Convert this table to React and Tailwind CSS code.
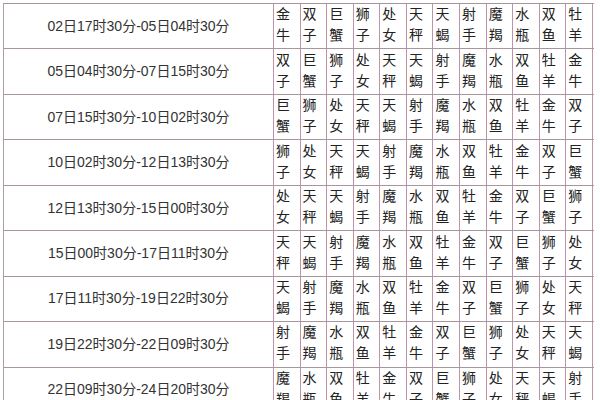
import React from "react";

const signs = ["牡羊", "金牛", "双子", "巨蟹", "狮子", "处女", "天秤", "天蝎", "射手", "魔羯", "水瓶", "双鱼"];
const times = [
  "02日17时30分-05日04时30分",
  "05日04时30分-07日15时30分",
  "07日15时30分-10日02时30分",
  "10日02时30分-12日13时30分",
  "12日13时30分-15日00时30分",
  "15日00时30分-17日11时30分",
  "17日11时30分-19日22时30分",
  "19日22时30分-22日09时30分",
  "22日09时30分-24日20时30分",
];

export default function App() {
  return (
    <div
      className="w-[600px] h-[400px] overflow-hidden bg-white"
      style={{ fontFamily: '"Liberation Sans", "Noto Sans CJK SC", sans-serif' }}
    >
      <div className="ml-[3px] mt-[3px] w-[591px] border-l border-t border-l-[#a8a0a6] border-t-[#a8969f]">
        {times.map((t, r) => (
          <div key={r} className="flex h-[45.46px] border-b border-[#a8969f]">
            <div className="w-[270px] shrink-0 flex items-center justify-center text-[14px] text-[#333] border-r border-[#bf94ab]">
              {t}
            </div>
            {Array.from({ length: 12 }).map((_, c) => {
              const s = signs[(r + 1 + c) % 12];
              return (
                <div
                  key={c}
                  className="w-[26.58px] shrink-0 flex flex-col justify-center pl-[2px] pb-[4px] text-[14px] leading-[21px] text-[#222] border-r border-[#bf94ab]"
                  style={{ fontFamily: '"Noto Sans CJK SC", sans-serif' }}
                >
                  <span>{s[0]}</span>
                  <span>{s[1]}</span>
                </div>
              );
            })}
          </div>
        ))}
      </div>
    </div>
  );
}
